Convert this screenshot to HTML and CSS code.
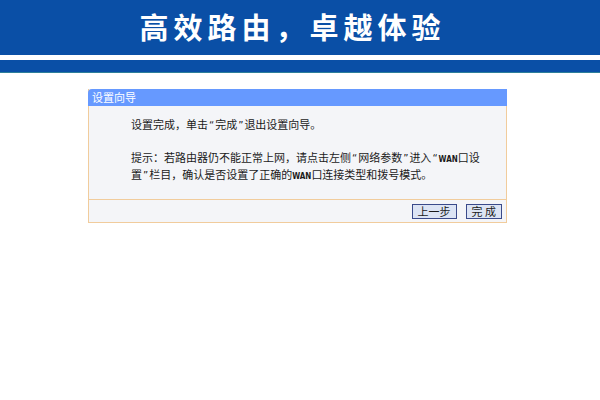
FILE: index.html
```html
<!DOCTYPE html>
<html lang="zh-CN">
<head>
<meta charset="utf-8">
<link rel="stylesheet" href="styles.css">
</head>
<body>
<div class="banner">
  <div class="banner-top">高效路由，卓越体验</div>
  <div class="banner-gap"></div>
  <div class="banner-bottom"></div>
</div>
<div class="main">
  <div class="panel">
    <div class="panel-title">设置向导</div>
    <div class="panel-body">
      <p class="line first">设置完成，单击<span class="q">“</span>完成<span class="q">”</span>退出设置向导。</p>
      <p class="line tip">提示：若路由器仍不能正常上网，请点击左侧<span class="q">“</span>网络参数<span class="q">”</span>进入<span class="q">“</span><span class="lat">WAN</span>口设<br>置<span class="q">”</span>栏目，确认是否设置了正确的<span class="lat">WAN</span>口连接类型和拨号模式。</p>
    </div>
    <div class="panel-foot">
      <button class="btn">上一步</button>
      <button class="btn">完&nbsp;成</button>
    </div>
  </div>
</div>
</body>
</html>
```
FILE: styles.css
```css
html, body {
  margin: 0;
  padding: 0;
  background: #ffffff;
  font-family: "Noto Sans CJK SC", "DejaVu Sans", sans-serif;
}
.banner-top {
  height: 55px;
  background: #0a4fa6;
  color: #ffffff;
  font-size: 29px;
  font-weight: 600;
  letter-spacing: 5px;
  padding-right: 15px;
  text-align: center;
  line-height: 52px;
}
.banner-gap {
  height: 5px;
  background: #ffffff;
}
.banner-bottom {
  height: 12px;
  background: #0a4fa6;
  border-bottom: 1px solid #2d7f9a;
}
.main {
  padding: 16px 0 0 88px;
}
.panel {
  width: 417px;
  border: 1px solid #f1cc9c;
  border-top: none;
  background: #f4f5f8;
}
.panel-title {
  height: 17px;
  background: #6699ff;
  color: #ffffff;
  font-size: 11px;
  line-height: 17px;
  padding-left: 4px;
  border-radius: 4px 0 0 0;
  margin: 0 -1px 0 -1px;
}
.panel-body {
  height: 93px;
  padding: 11px 0 0 42px;
  box-sizing: border-box;
  font-size: 11px;
  color: #1a1a1a;
}
.line {
  margin: 0;
  line-height: 14px;
  white-space: nowrap;
}
.q {
  font-family: "DejaVu Sans", sans-serif;
  font-size: 10px;
  padding: 0 1px;
}
.lat {
  font-family: "DejaVu Sans Condensed", "DejaVu Sans", sans-serif;
  font-size: 8px;
  font-weight: bold;
}
.tip {
  margin-top: 17px;
}
.panel-foot {
  border-top: 1px solid #f1cc9c;
  height: 22px;
  display: flex;
  justify-content: flex-end;
  align-items: center;
  gap: 9px;
  padding-right: 4px;
}
.btn {
  height: 15px;
  padding: 0 5px;
  font-family: "Noto Sans CJK SC", sans-serif;
  font-size: 11px;
  line-height: 13px;
  color: #1a1a1a;
  background: #dce4f4;
  border: 1px solid #3a4a8a;
  border-radius: 0;
}
```
